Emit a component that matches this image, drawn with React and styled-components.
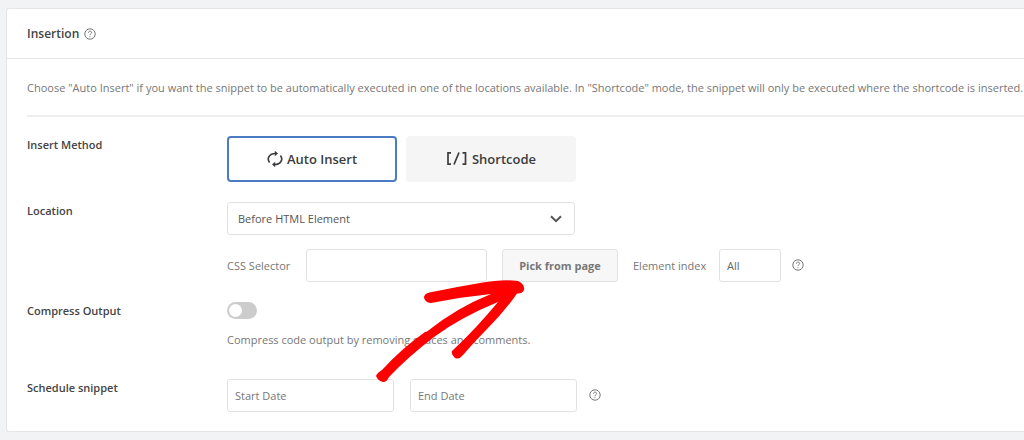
import { useState } from 'react'
import styled, { createGlobalStyle } from 'styled-components'

const App = () => {
  const [method, setMethod] = useState('auto')

  return (
    <>
      <GlobalStyle />
      <Card>
        <CardHeader>
          <Title>Insertion</Title>
          <HelpIcon />
        </CardHeader>
        <CardBody>
          <Description>
            Choose "Auto Insert" if you want the snippet to be automatically executed in one of the
            locations available. In "Shortcode" mode, the snippet will only be executed where the
            shortcode is inserted.
          </Description>
          <Divider />

          <Row>
            <RowLabel as="span" id="method-label">Insert Method</RowLabel>
            <Methods role="group" aria-labelledby="method-label">
              <MethodButton
                type="button"
                $active={method === 'auto'}
                aria-pressed={method === 'auto'}
                onClick={() => setMethod('auto')}
              >
                <AutoIcon />
                Auto Insert
              </MethodButton>
              <MethodButton
                type="button"
                $active={method === 'shortcode'}
                aria-pressed={method === 'shortcode'}
                onClick={() => setMethod('shortcode')}
              >
                <ShortcodeIcon />
                Shortcode
              </MethodButton>
            </Methods>
          </Row>

          <Row>
            <RowLabel htmlFor="location">Location</RowLabel>
            <Stack $gap="14px">
              <SelectWrap>
                <Select id="location" defaultValue="before">
                  <option value="before">Before HTML Element</option>
                  <option value="after">After HTML Element</option>
                </Select>
                <Chevron viewBox="0 0 12 8" aria-hidden="true">
                  <path d="M1 1.2 6 6.2 11 1.2" />
                </Chevron>
              </SelectWrap>
              <Fields $gap="15px">
                <FieldLabel htmlFor="selector" $width="64px">CSS Selector</FieldLabel>
                <Input id="selector" type="text" $width="181px" />
                <PickButton type="button">Pick from page</PickButton>
                <FieldLabel htmlFor="index" $width="71px">Element index</FieldLabel>
                <Input id="index" type="text" defaultValue="All" $width="62px" />
                <HelpIcon />
              </Fields>
            </Stack>
          </Row>

          <Row>
            <RowLabel htmlFor="compress">Compress Output</RowLabel>
            <Stack $gap="12px">
              <Toggle id="compress" type="checkbox" />
              <Hint>Compress code output by removing spaces and comments.</Hint>
            </Stack>
          </Row>

          <Row $spaced>
            <RowLabel htmlFor="start">Schedule snippet</RowLabel>
            <Fields $gap="16px">
              <Input id="start" type="text" placeholder="Start Date" $width="167px" />
              <Input type="text" placeholder="End Date" aria-label="End Date" $width="167px" />
              <HelpIcon />
            </Fields>
          </Row>
        </CardBody>

        <Arrow viewBox="376 280 150 102" aria-hidden="true">
          <path d="M425 295Q426 293 432 292Q456 287 480 283Q503 279 518 281Q525 284 524 290Q522 294 517 293.500Q505 311 488 328Q474 342 463 355Q459 360 455 358Q451 355 452 351Q464 340 477 326Q488 314 498 302Q461 317 434 337Q408 357 389 377Q387 382 383 382Q378 381 376 376Q377 373 382 370Q401 349 425 332L427 331.500Q456 308 491 294Q461 297 431 303Q427 303 425 300Q423 297 425 295Z" />
        </Arrow>
      </Card>
    </>
  )
}

export default App

const HelpIcon = () => (
  <Help viewBox="0 0 12 12" role="img" aria-label="Help">
    <circle cx="6" cy="6" r="5.200" />
    <path d="M4.400 4.700C4.500 2.600 7.600 2.600 7.600 4.600C7.600 5.700 6 5.700 6 7.100" />
    <path d="M6 8.200V9.200" />
  </Help>
)

const AutoIcon = () => (
  <svg width="16" height="18" viewBox="0 0 16 18" aria-hidden="true">
    <g fill="none" stroke="#3c3c3c" strokeWidth="1.600">
      <path d="M2.600 12.600C-.6 8.400 2.400 3.500 8.300 3.500" />
      <path d="M13.400 5.400C16.600 9.600 13.600 14.500 7.700 14.500" />
    </g>
    <path d="M7.800.7 11 3.500 7.800 6.300ZM8.200 11.700 5 14.500 8.200 17.300Z" fill="#3c3c3c" />
  </svg>
)

const ShortcodeIcon = () => (
  <svg width="22" height="16" viewBox="0 0 22 16" aria-hidden="true">
    <path
      d="M5 1.800H2V13.200H5M8 13.500 13 1.500M16.500 1.800H19.500V13.200H16.500"
      fill="none"
      stroke="#3c3c3c"
      strokeWidth="1.700"
    />
  </svg>
)

const GlobalStyle = createGlobalStyle`
  * {
    box-sizing: border-box;
  }

  body {
    margin: 0;
    padding: 8px 0 8px 6px;
    background: #f2f3f5;
    overflow-x: hidden;
  }

  body, button, input, select {
    font-family: "Open Sans", "Noto Sans", sans-serif;
    font-size: 11px;
    line-height: 18px;
    color: #777;
  }
`;

const Card = styled.section`
  position: relative;
  background: #fff;
  border: 1px solid #e4e5e7;
  border-right: none;
  border-radius: 3px 0 0 3px;
`;

const CardHeader = styled.header`
  display: flex;
  align-items: center;
  gap: 5px;
  height: 50px;
  padding: 0 20px;
  border-bottom: 1px solid #e4e4e4;
`;

const Title = styled.h2`
  margin: 0;
  font-size: 12px;
  font-weight: 600;
  color: #444;
`;

const Help = styled.svg`
  flex: none;
  width: 12px;
  height: 12px;
  fill: none;
  stroke: #777;
  stroke-width: 1;
`;

const CardBody = styled.div`
  padding: 20px 0 19px 20px;
`;

const Description = styled.p`
  margin: 0 0 18px;
`;

const Divider = styled.hr`
  height: 2px;
  margin: 0 0 19px;
  border: none;
  background: #eee;
`;

const Row = styled.div`
  display: grid;
  grid-template-columns: 200px 1fr;
  align-items: start;
  margin-top: ${(props) => (props.$spaced ? '30px' : '20px')};

  ${Divider} + & {
    margin-top: 0;
  }
`;

const RowLabel = styled.label`
  font-weight: 600;
  color: #444;
`;

const Stack = styled.div`
  display: flex;
  flex-direction: column;
  align-items: flex-start;
  gap: ${(props) => props.$gap};
`;

const Methods = styled.div`
  display: flex;
  gap: 9px;
`;

const MethodButton = styled.button`
  display: flex;
  align-items: center;
  justify-content: center;
  gap: 4px;
  width: 170px;
  height: 46px;
  padding: 0;
  border: 2px solid ${(props) => (props.$active ? '#4a7bc3' : '#f5f5f5')};
  border-radius: 4px;
  background: ${(props) => (props.$active ? '#fff' : '#f5f5f5')};
  font-size: 13px;
  font-weight: 600;
  color: #3c3c3c;
  cursor: pointer;
`;

const SelectWrap = styled.div`
  position: relative;
  width: 348px;
`;

const Select = styled.select`
  display: block;
  width: 100%;
  height: 33px;
  padding: 0 30px 0 10px;
  border: 1px solid #e2e2e2;
  border-radius: 3px;
  background: #fff;
  color: #555;
  appearance: none;
`;

const Chevron = styled.svg`
  position: absolute;
  top: 13px;
  right: 13px;
  width: 12px;
  height: 8px;
  fill: none;
  stroke: #555;
  stroke-width: 2;
  pointer-events: none;
`;

const Fields = styled.div`
  display: flex;
  align-items: center;
  gap: ${(props) => props.$gap};

  ${Help} {
    margin: 0 0 2px -4px;
  }
`;

const FieldLabel = styled.label`
  flex: none;
  width: ${(props) => props.$width};
  white-space: nowrap;
`;

const Input = styled.input`
  width: ${(props) => props.$width};
  height: 33px;
  padding: 0 7px;
  border: 1px solid #e2e2e2;
  border-radius: 3px;
  background: #fff;
  color: #666;

  &::placeholder {
    color: #777;
    opacity: 1;
  }
`;

const PickButton = styled.button`
  width: 116px;
  height: 33px;
  padding: 0;
  border: 1px solid #e2e2e2;
  border-radius: 3px;
  background: #f7f7f7;
  font-weight: 700;
  cursor: pointer;
`;

const Toggle = styled.input`
  display: block;
  width: 30px;
  height: 17px;
  margin: 0;
  padding: 2px;
  border-radius: 9px;
  background: #ccc;
  appearance: none;
  cursor: pointer;

  &::before {
    content: "";
    display: block;
    width: 13px;
    height: 13px;
    border-radius: 50%;
    background: #fff;
  }

  &:checked {
    background: #4a7bc3;
  }

  &:checked::before {
    margin-left: auto;
  }
`;

const Hint = styled.p`
  margin: 0;
`;

const Arrow = styled.svg`
  position: absolute;
  top: 271px;
  left: 369px;
  width: 150px;
  height: 102px;
  fill: #fe0000;
  pointer-events: none;
`;
